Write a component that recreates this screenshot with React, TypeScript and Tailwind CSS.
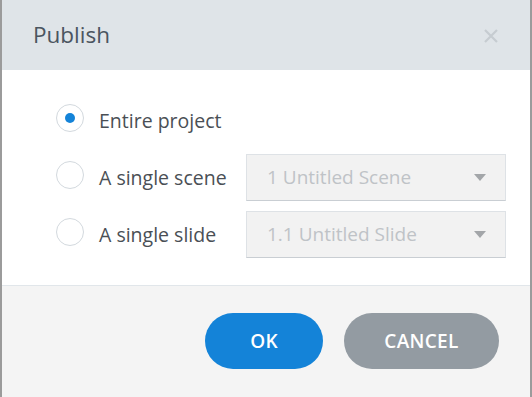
import React from 'react';

const font = { fontFamily: '"Open Sans", "Noto Sans", sans-serif' };

const Radio: React.FC<{ checked?: boolean }> = ({ checked }) => (
    <span className="w-[28px] h-[28px] rounded-full border border-[#d3d9de] bg-white flex items-center justify-center shrink-0 mb-[6px]">
        {checked && <span className="w-[10px] h-[10px] rounded-full bg-[#1483d8]" />}
    </span>
);

const SelectBox: React.FC<{ value: string }> = ({ value }) => (
    <div className="w-[260px] h-[47px] bg-[#f2f2f2] border border-[#dee2e6] border-b-[#c9ced3] flex items-center justify-between pl-[20px] pr-[19px]">
        <span className="text-[19px] text-[#bfc3c7]">{value}</span>
        <svg width="12" height="7" viewBox="0 0 12 7">
            <path d="M0 0 H12 L6 7 Z" fill="#a3a6a9" />
        </svg>
    </div>
);

const App: React.FC = () => {
    return (
        <div className="w-[532px] h-[397px] flex flex-col border-x-2 border-x-[#9b9b9b] bg-white overflow-hidden" style={font}>
            {/* Header */}
            <div className="h-[70px] bg-[#dfe4e8] flex items-center justify-between pl-[31px] pr-[32px] shrink-0">
                <h2 className="text-[22.5px] text-[#4b5560] pb-[1px]">Publish</h2>
                <svg width="14" height="14" viewBox="0 0 14 14" className="mt-[1px]">
                    <path d="M1 1 L13 13 M13 1 L1 13" stroke="#c6ccd1" strokeWidth="2.2" />
                </svg>
            </div>

            {/* Body */}
            <div className="h-[216px] pt-[27px] pl-[54px] flex flex-col gap-[10px] border-b border-[#e1e6ea]">
                <div className="h-[47px] flex items-center">
                    <Radio checked />
                    <span className="ml-[15px] text-[19.5px] text-[#4a4f55]">Entire project</span>
                </div>
                <div className="h-[47px] flex items-center">
                    <Radio />
                    <span className="ml-[15px] w-[147px] text-[19.5px] text-[#4a4f55]">A single scene</span>
                    <SelectBox value="1 Untitled Scene" />
                </div>
                <div className="h-[47px] flex items-center">
                    <Radio />
                    <span className="ml-[15px] w-[147px] text-[19.5px] text-[#4a4f55]">A single slide</span>
                    <SelectBox value="1.1 Untitled Slide" />
                </div>
            </div>

            {/* Footer */}
            <div className="flex-1 bg-[#f4f4f4] flex justify-end items-start pt-[27px] pr-[31px] gap-[21px]">
                <button className="w-[118px] h-[56px] rounded-full bg-[#1483d8] text-white text-[19px] font-semibold tracking-[0.3px]">
                    OK
                </button>
                <button className="w-[155px] h-[56px] rounded-full bg-[#939ba2] text-white text-[19px] font-semibold tracking-[0.3px]">
                    CANCEL
                </button>
            </div>
        </div>
    );
};

export default App;
